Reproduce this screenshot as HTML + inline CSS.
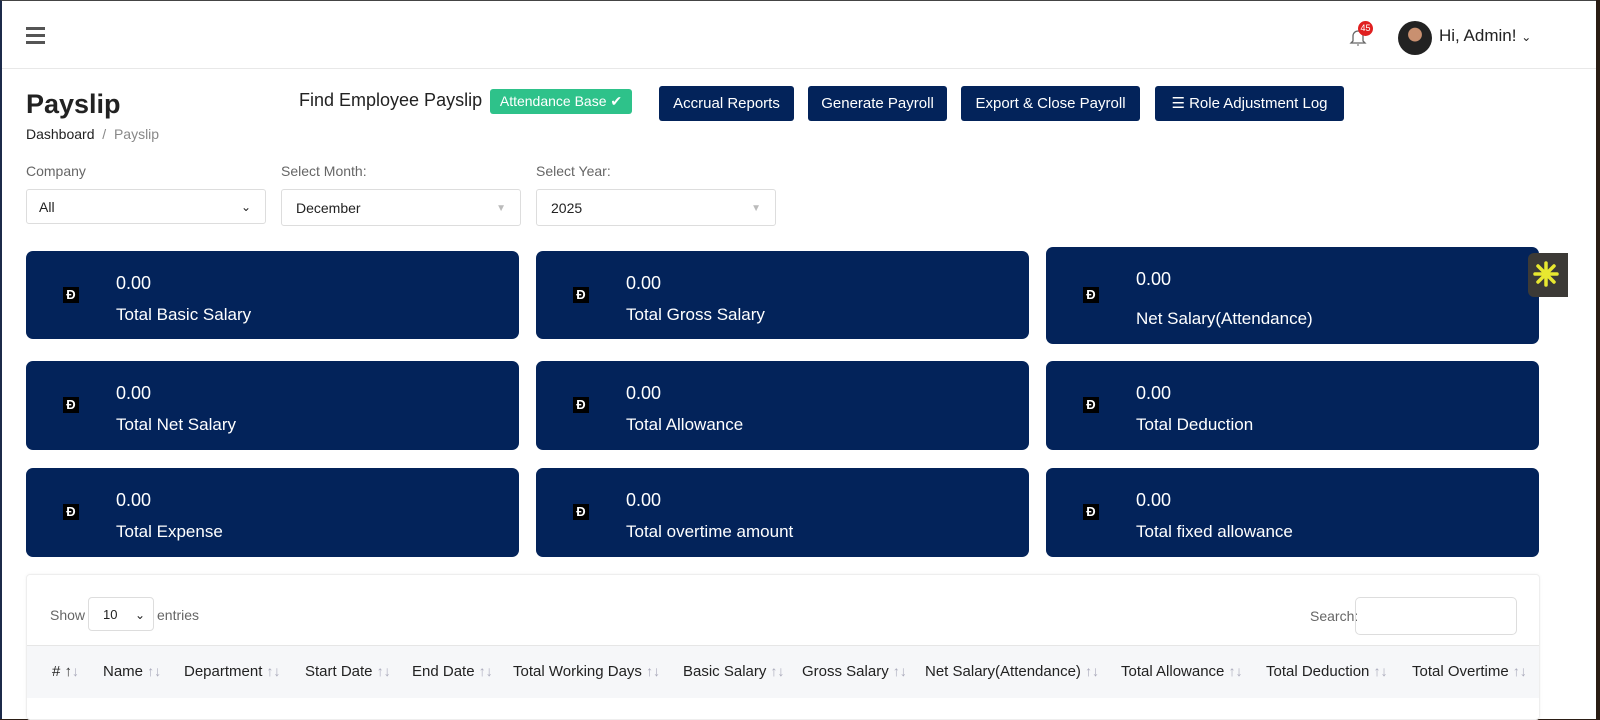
<!DOCTYPE html>
<html><head><meta charset="utf-8"><style>
*{box-sizing:border-box;margin:0;padding:0}
body{width:1600px;height:719px;overflow:hidden;background:#2a1d14;font-family:"Liberation Sans",sans-serif;color:#222;position:relative}
.page{position:absolute;left:0;top:0;width:1596px;height:719px;background:#fff;border-left:2px solid #1c2a4a;border-top:1px solid #444}
.hdr{position:absolute;left:0;top:0;width:100%;height:68px;border-bottom:1px solid #e8e8e8}
.abs{position:absolute}
.btn{position:absolute;top:85px;height:35px;background:#03235a;color:#fff;border-radius:3px;font-size:15px;line-height:35px;text-align:center}
.lbl{position:absolute;top:162px;font-size:14px;color:#666}
.sel{position:absolute;top:188px;height:37px;border:1px solid #ddd;border-radius:3px;font-size:14px;line-height:37px;padding-left:14px;color:#222}
.card{position:absolute;width:493px;background:#03235a;border-radius:7px;color:#fff}
.card .ic{position:absolute;left:37px;width:16px;height:16px;background:#000;color:#fff;font-size:13px;font-weight:bold;line-height:16px;text-align:center}
.card .v{position:absolute;left:90px;font-size:18px}
.card .t{position:absolute;left:90px;font-size:17px}
.th{position:absolute;top:662px;font-size:15px;color:#222}
.ar{color:#aab;font-size:14px}
</style></head><body>
<div class="page">
<div class="hdr">
 <div class="abs" style="left:24px;top:26px;width:19px;height:3px;background:#555;box-shadow:0 7px 0 #555,0 14px 0 #555"></div>
 <svg class="abs" style="left:1347px;top:26px" width="18" height="20" viewBox="0 0 18 20"><path d="M4 14V9a5 5 0 0 1 10 0v5l2 2H2z" fill="none" stroke="#666" stroke-width="1.3"/><path d="M8 18h2" stroke="#666"/></svg>
 <div class="abs" style="left:1356px;top:20px;width:15px;height:15px;border-radius:50%;background:#e02020;color:#fff;font-size:9px;line-height:15px;text-align:center">45</div>
 <div class="abs" style="left:1396px;top:20px;width:34px;height:34px;border-radius:50%;background:radial-gradient(circle at 50% 40%,#c99070 0 25%,#222 27%)"></div>
 <div class="abs" style="left:1437px;top:25px;font-size:17px;color:#222">Hi, Admin! <span style="font-size:12px">&#8964;</span></div>
</div>
<div class="abs" style="left:24px;top:88px;font-size:27px;font-weight:bold;color:#222">Payslip</div>
<div class="abs" style="left:24px;top:125px;font-size:14px">Dashboard <span style="color:#888">&nbsp;/&nbsp; Payslip</span></div>
<div class="abs" style="left:297px;top:89px;font-size:18px">Find Employee Payslip</div>
<div class="abs" style="left:488px;top:88px;width:142px;height:25px;background:#2ec28a;border-radius:3px;color:#fff;font-size:14px;line-height:25px;text-align:center">Attendance Base ✔</div>
<div class="btn" style="left:657px;width:135px">Accrual Reports</div>
<div class="btn" style="left:806px;width:139px">Generate Payroll</div>
<div class="btn" style="left:959px;width:179px">Export &amp; Close Payroll</div>
<div class="btn" style="left:1153px;width:189px">☰ Role Adjustment Log</div>
<div class="lbl" style="left:24px">Company</div>
<div class="lbl" style="left:279px">Select Month:</div>
<div class="lbl" style="left:534px">Select Year:</div>
<div class="sel" style="left:24px;width:240px;top:188px;height:35px;line-height:35px;padding-left:12px">All<span style="position:absolute;right:14px;font-size:12px">&#8964;</span></div>
<div class="sel" style="left:279px;width:240px">December<span style="position:absolute;right:14px;color:#bbb;font-size:10px">▼</span></div>
<div class="sel" style="left:534px;width:240px">2025<span style="position:absolute;right:14px;color:#bbb;font-size:10px">▼</span></div>

<div class="card" style="left:24px;top:250px;height:88px"><div class="ic" style="top:36px">Đ</div><div class="v" style="top:22px">0.00</div><div class="t" style="top:54px">Total Basic Salary</div></div>
<div class="card" style="left:534px;top:250px;height:88px"><div class="ic" style="top:36px">Đ</div><div class="v" style="top:22px">0.00</div><div class="t" style="top:54px">Total Gross Salary</div></div>
<div class="card" style="left:1044px;top:246px;height:97px"><div class="ic" style="top:40px">Đ</div><div class="v" style="top:22px">0.00</div><div class="t" style="top:62px">Net Salary(Attendance)</div></div>
<div class="card" style="left:24px;top:360px;height:89px"><div class="ic" style="top:36px">Đ</div><div class="v" style="top:22px">0.00</div><div class="t" style="top:54px">Total Net Salary</div></div>
<div class="card" style="left:534px;top:360px;height:89px"><div class="ic" style="top:36px">Đ</div><div class="v" style="top:22px">0.00</div><div class="t" style="top:54px">Total Allowance</div></div>
<div class="card" style="left:1044px;top:360px;height:89px"><div class="ic" style="top:36px">Đ</div><div class="v" style="top:22px">0.00</div><div class="t" style="top:54px">Total Deduction</div></div>
<div class="card" style="left:24px;top:467px;height:89px"><div class="ic" style="top:36px">Đ</div><div class="v" style="top:22px">0.00</div><div class="t" style="top:54px">Total Expense</div></div>
<div class="card" style="left:534px;top:467px;height:89px"><div class="ic" style="top:36px">Đ</div><div class="v" style="top:22px">0.00</div><div class="t" style="top:54px">Total overtime amount</div></div>
<div class="card" style="left:1044px;top:467px;height:89px"><div class="ic" style="top:36px">Đ</div><div class="v" style="top:22px">0.00</div><div class="t" style="top:54px">Total fixed allowance</div></div>

<div class="abs" style="left:1526px;top:252px;width:40px;height:44px;background:#3c3a36;border-radius:6px 0 0 6px"><svg width="40" height="44" viewBox="0 0 40 44"><g stroke="#e8e830" stroke-width="3.5" stroke-linecap="round"><path d="M18 10v22M7 21h22M10 13l16 16M26 13L10 29"/></g></svg></div>

<div class="abs" style="left:24px;top:573px;width:1514px;height:146px;border:1px solid #eee;border-radius:4px;box-shadow:0 0 3px rgba(0,0,0,.05)"></div>
<div class="abs" style="left:48px;top:606px;font-size:14px;color:#666">Show</div>
<div class="abs" style="left:86px;top:596px;width:66px;height:34px;border:1px solid #ddd;border-radius:4px;font-size:13px;line-height:34px;padding-left:14px">10<span style="position:absolute;right:8px;font-size:12px">&#8964;</span></div>
<div class="abs" style="left:155px;top:606px;font-size:14px;color:#666">entries</div>
<div class="abs" style="left:1308px;top:607px;font-size:14px;color:#666">Search:</div>
<div class="abs" style="left:1353px;top:596px;width:162px;height:38px;border:1px solid #ddd;border-radius:5px"></div>
<div class="abs" style="left:25px;top:644px;width:1512px;height:53px;background:#f6f7f9;border-top:1px solid #e6e6e6"></div>
<div class="th" style="left:50px"># <span style="color:#333">↑</span><span class="ar">↓</span></div>
<div class="th" style="left:101px">Name <span class="ar">↑↓</span></div>
<div class="th" style="left:182px">Department <span class="ar">↑↓</span></div>
<div class="th" style="left:303px">Start Date <span class="ar">↑↓</span></div>
<div class="th" style="left:410px">End Date <span class="ar">↑↓</span></div>
<div class="th" style="left:511px">Total Working Days <span class="ar">↑↓</span></div>
<div class="th" style="left:681px">Basic Salary <span class="ar">↑↓</span></div>
<div class="th" style="left:800px">Gross Salary <span class="ar">↑↓</span></div>
<div class="th" style="left:923px">Net Salary(Attendance) <span class="ar">↑↓</span></div>
<div class="th" style="left:1119px">Total Allowance <span class="ar">↑↓</span></div>
<div class="th" style="left:1264px">Total Deduction <span class="ar">↑↓</span></div>
<div class="th" style="left:1410px">Total Overtime <span class="ar">↑↓</span></div>
</div>
</body></html>
